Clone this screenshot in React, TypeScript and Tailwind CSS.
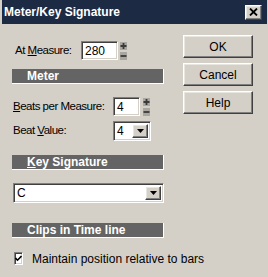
import React from 'react';

const sunken =
  'border border-t-[#808080] border-l-[#808080] border-r-white border-b-white shadow-[inset_1px_1px_0_#404040,inset_-1px_-1px_0_#d4d0c8]';
const raised =
  'border border-t-white border-l-white border-r-[#404040] border-b-[#404040] shadow-[inset_-1px_-1px_0_#808080,inset_1px_1px_0_#e8e6e0]';

const Header = ({ children }: { children: React.ReactNode }) => (
  <div className="h-[15px] w-[152px] bg-[#646464] border-r border-b border-white flex items-center pl-[15px] text-[12px] font-bold text-white leading-none">
    {children}
  </div>
);

const Spinner = () => (
  <div className="flex flex-col justify-between h-[18px] w-[7px]">
    <svg width="7" height="8" viewBox="0 0 7 8">
      <rect width="7" height="8" fill="#a9a6a0" />
      <path d="M0.5 4h6M3.5 1v6" stroke="#3a3a3a" strokeWidth="1.8" />
    </svg>
    <svg width="7" height="8" viewBox="0 0 7 8">
      <rect width="7" height="8" fill="#a9a6a0" />
      <path d="M0.5 4h6" stroke="#3a3a3a" strokeWidth="1.8" />
    </svg>
  </div>
);

const Arrow = () => (
  <div className={`w-[16px] h-full flex items-center justify-center bg-[#d4d0c8] ${raised}`}>
    <svg width="7" height="4" viewBox="0 0 7 4">
      <path d="M0 0h7L3.5 4z" fill="#000" />
    </svg>
  </div>
);

const Button = ({ label }: { label: string }) => (
  <div className={`h-[23px] w-[70px] flex items-center justify-center text-[12px] text-black bg-[#d4d0c8] ${raised}`}>
    {label}
  </div>
);

export default function App() {
  return (
    <div
      className="w-[268px] h-[277px] bg-[#d4d0c8] overflow-hidden text-black"
      style={{ fontFamily: '"Liberation Sans", Arial, sans-serif' }}
    >
      <div className="h-[24px] ml-[2px] mr-[1px] bg-[#1c2a44] flex items-center justify-between pl-[2px] pr-[5px]">
        <span className="text-[12px] font-bold text-white leading-none">Meter/Key Signature</span>
        <div className={`w-[17px] h-[15px] flex items-center justify-center bg-[#d4d0c8] ${raised}`}>
          <svg width="9" height="8" viewBox="0 0 9 8">
            <path d="M1 0.5l7 7M8 0.5l-7 7" stroke="#000" strokeWidth="1.8" />
          </svg>
        </div>
      </div>

      <div className="flex">
        <div className="ml-[12px] w-[152px] flex flex-col">
          <div className="mt-[17px] h-[19px] flex items-center">
            <span className="w-[69px] pl-[3px] text-[11.5px] tracking-[-0.5px]">
              At <span className="underline">M</span>easure:
            </span>
            <div className={`w-[37px] h-[19px] bg-white flex items-center pl-[3px] text-[12px] ${sunken}`}>280</div>
            <div className="ml-[2px]">
              <Spinner />
            </div>
          </div>

          <div className="mt-[9px]">
            <Header>Meter</Header>
          </div>

          <div className="mt-[13px] h-[19px] flex items-center">
            <span className="w-[101px] pl-[1px] text-[11.5px] tracking-[-0.5px]">
              <span className="underline">B</span>eats per Measure:
            </span>
            <div className={`w-[27px] h-[19px] bg-white flex items-center pl-[3px] text-[12px] ${sunken}`}>4</div>
            <div className="ml-[3px]">
              <Spinner />
            </div>
          </div>

          <div className="mt-[5px] h-[20px] flex items-center">
            <span className="w-[101px] pl-[1px] text-[11.5px] tracking-[-0.5px]">
              Beat <span className="underline">V</span>alue:
            </span>
            <div className={`w-[38px] h-[20px] bg-white flex items-center p-[2px] text-[12px] ${sunken}`}>
              <span className="flex-1 pl-[1px]">4</span>
              <Arrow />
            </div>
          </div>

          <div className="mt-[14px]">
            <Header>
              <span className="underline">K</span>ey Signature
            </Header>
          </div>

          <div className={`mt-[13px] ml-[1px] w-[151px] h-[20px] bg-white flex items-center p-[2px] text-[12px] ${sunken}`}>
            <span className="flex-1 pl-[1px]">C</span>
            <Arrow />
          </div>

          <div className="mt-[20px]">
            <Header>Clips in Time line</Header>
          </div>

          <div className="mt-[14px] h-[13px] flex items-center">
            <div className={`ml-[2px] w-[13px] h-[13px] bg-white flex items-center justify-center ${sunken}`}>
              <svg width="7" height="7" viewBox="0 0 7 7">
                <path d="M0.5 3l2 2.2L6.5 1" stroke="#000" strokeWidth="1.6" fill="none" />
              </svg>
            </div>
            <span className="ml-[9px] text-[12px] whitespace-nowrap">Maintain position relative to bars</span>
          </div>
        </div>

        <div className="ml-[19px] mt-[11px] flex flex-col gap-[5px]">
          <Button label="OK" />
          <Button label="Cancel" />
          <Button label="Help" />
        </div>
      </div>
    </div>
  );
}
